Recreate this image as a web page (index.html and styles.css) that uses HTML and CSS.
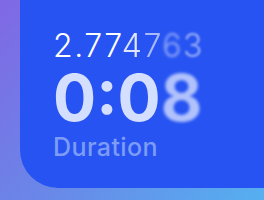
FILE: index.html
```html
<!DOCTYPE html>
<html lang="en">
<head>
    <meta charset="UTF-8">
    <title>Timer</title>
    <link rel="stylesheet" href="styles.css">
</head>
<body>
    <div class="card">
        <div class="elapsed">2.77<span class="f1">4</span><span class="f2">7</span><span class="f3">6</span><span class="f4">3</span></div>
        <div class="time">0:0<span class="blur">8</span></div>
        <div class="label">Duration</div>
    </div>
</body>
</html>
```

FILE: styles.css
```css
body {
    margin: 0;
    width: 264px;
    height: 200px;
    overflow: hidden;
    font-family: Inter, 'Noto Sans', sans-serif;
    background: linear-gradient(135deg, #8068e4 0%, #6a86e8 50%, #55b0f0 100%);
}
.card {
    margin-left: 20px;
    height: 188px;
    box-sizing: border-box;
    padding: 27px 0 0 33px;
    background-color: #2653f2;
    border-bottom-left-radius: 38px;
}
.elapsed {
    font-size: 32px;
    font-weight: 300;
    color: #ffffff;
    line-height: 38px;
    letter-spacing: 1.5px;
}
.f1 { opacity: 0.85; }
.f2 { opacity: 0.6; filter: blur(0.4px); }
.f3 { opacity: 0.5; filter: blur(1.4px); }
.f4 { opacity: 0.55; filter: blur(1.2px); }
.time {
    font-size: 64px;
    font-weight: 700;
    color: #d4defe;
    line-height: 64px;
    margin-top: 1px;
}
.blur {
    opacity: 0.8;
    filter: blur(1.6px);
}
.label {
    font-size: 25px;
    font-weight: 500;
    color: #7d9cf6;
    line-height: 30px;
    letter-spacing: 0.4px;
    margin-top: 2px;
}
```
